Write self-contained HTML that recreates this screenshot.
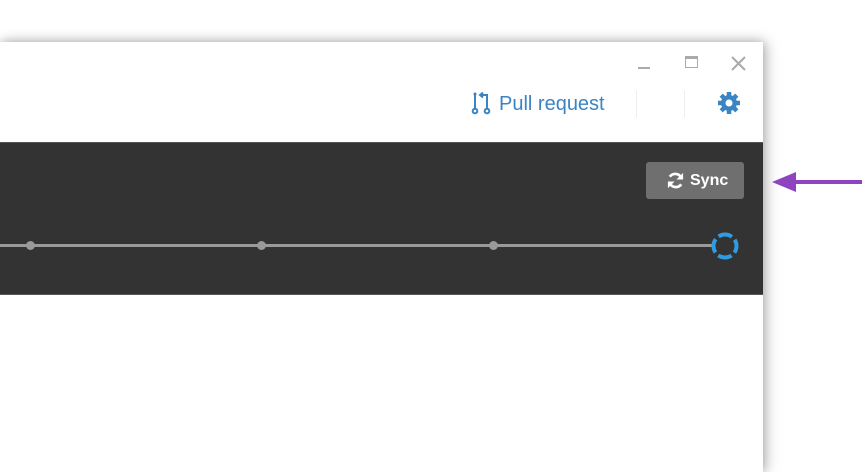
<!DOCTYPE html>
<html><head><style>
body{margin:0;width:863px;height:457px;background:#fff;position:relative;overflow:hidden;font-family:"Liberation Sans",sans-serif}
.win{position:absolute;left:0;top:42px;width:763px;height:430px;background:#fff;box-shadow:0 0 10px rgba(0,0,0,.25),4px 0 14px rgba(0,0,0,.18)}
.dark{position:absolute;left:0;top:100px;width:763px;height:153px;background:#333;border-top:1px solid #555;border-bottom:1px solid #555;box-sizing:border-box}
.pr{position:absolute;left:470px;top:51px;color:#3b84c4;font-size:20px}
.sep{position:absolute;top:48px;width:1px;height:28px;background:#eee}
.sync{position:absolute;left:646px;top:19px;width:98px;height:37px;background:#6f6f6f;border-radius:3px;color:#fff;font-size:17px;line-height:37px;box-sizing:border-box;padding-left:44px}
</style></head><body>
<div class="win">
 <div style="position:absolute;left:638px;top:25px;width:12px;height:2px;background:#aaa"></div>
 <div style="position:absolute;left:685px;top:14px;width:13px;height:12px;border:1px solid #aaa;border-top-width:3px;box-sizing:border-box"></div>
 <svg style="position:absolute;left:731px;top:14px" width="15" height="15"><path d="M1 1L14 14M14 1L1 14" stroke="#aaa" stroke-width="2"/></svg>
 <svg style="position:absolute;left:471px;top:49px" width="20" height="24" viewBox="0 0 20 24"><g fill="none" stroke="#3b84c4" stroke-width="2"><circle cx="4" cy="20" r="2.3"/><path d="M4 3V17.5M16 7V17.5"/><circle cx="16" cy="20" r="2.3"/><path d="M16 7V4H10M12 1.5L9 4L12 6.5"/></g><circle cx="4" cy="3" r="1.5" fill="#3b84c4"/></svg>
 <div class="pr" style="left:499px">Pull request</div>
 <div class="sep" style="left:636px"></div><div class="sep" style="left:684px"></div>
 <svg style="position:absolute;left:717px;top:49px" width="24" height="24" viewBox="0 0 24 24"><g fill="#3b84c4"><circle cx="12" cy="12" r="8"/><g stroke="#3b84c4" stroke-width="4.5"><path d="M12 1V23M1 12H23M4.2 4.2L19.8 19.8M19.8 4.2L4.2 19.8"/></g></g><circle cx="12" cy="12" r="3.5" fill="#fff"/></svg>
 <div class="dark">
  <div class="sync" style="font-weight:bold;font-size:16px"><svg style="position:absolute;left:20px;top:9px" width="19" height="19" viewBox="0 0 20 20"><g fill="none" stroke="#fff" stroke-width="2.8"><path d="M16 7A7 7 0 0 0 4 6"/><path d="M4 13A7 7 0 0 0 16 14"/></g><path d="M18 2V9H11Z M2 18V11H9Z" fill="#fff"/></svg>Sync</div>
  <div style="position:absolute;left:0;top:101px;width:712px;height:3px;background:#9a9a9a"></div>
  <div style="position:absolute;left:26px;top:98px;width:9px;height:9px;border-radius:50%;background:#9a9a9a"></div>
  <div style="position:absolute;left:257px;top:98px;width:9px;height:9px;border-radius:50%;background:#9a9a9a"></div>
  <div style="position:absolute;left:489px;top:98px;width:9px;height:9px;border-radius:50%;background:#9a9a9a"></div>
  <svg style="position:absolute;left:710px;top:88px" width="30" height="30"><circle cx="15" cy="15" r="11.5" fill="none" stroke="#2f9be0" stroke-width="4" stroke-dasharray="14.06 4" stroke-dashoffset="7.03"/></svg>
 </div>
</div>
<svg style="position:absolute;left:770px;top:170px" width="93" height="24"><path d="M12 12H92" stroke="#8e44c0" stroke-width="4"/><path d="M2 12L26 2V22Z" fill="#8e44c0"/></svg>
</body></html>
